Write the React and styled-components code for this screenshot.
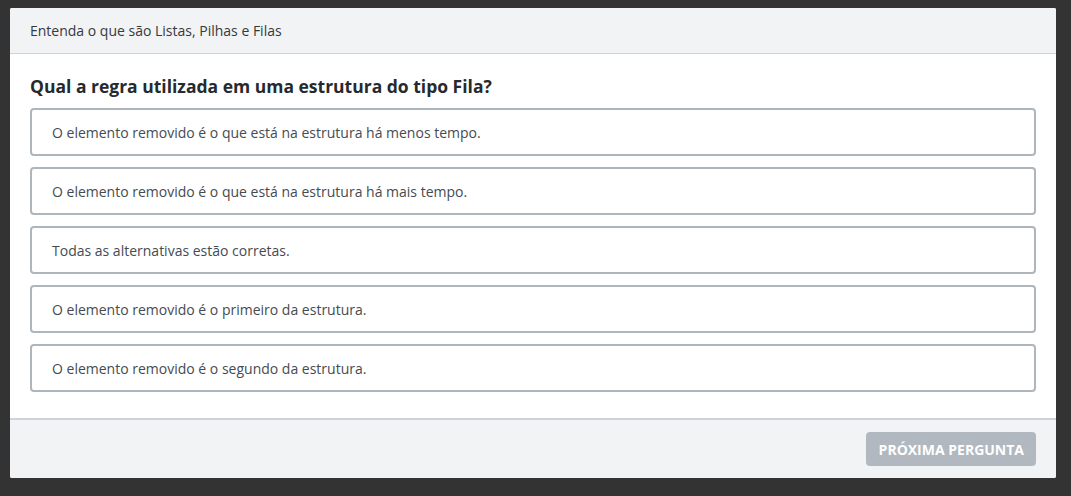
import React from 'react';
import styled, { createGlobalStyle } from 'styled-components';

const GlobalStyle = createGlobalStyle`
  html, body {
    margin: 0;
    padding: 0;
    background: #333333;
    font-family: "Open Sans", "Noto Sans", sans-serif;
  }
`;

const Page = styled.div`
  width: 1071px;
  height: 496px;
  padding: 8px 15px 18px 10px;
  box-sizing: border-box;
`;

const Card = styled.div`
  display: flex;
  flex-direction: column;
  height: 100%;
  background: #ffffff;
  border-radius: 2px;
  overflow: hidden;
`;

const Header = styled.div`
  display: flex;
  align-items: center;
  height: 46px;
  padding: 0 20px 1px;
  box-sizing: border-box;
  background: #f2f3f4;
  border-bottom: 1px solid #cfd2d6;
  font-size: 14px;
  color: #343a40;
`;

const Body = styled.div`
  flex: 1;
  padding: 20px 20px 0;
`;

const Question = styled.h2`
  margin: 0 0 10px;
  font-size: 17.5px;
  line-height: 24px;
  font-weight: 700;
  color: #262a2e;
`;

const Options = styled.div`
  display: flex;
  flex-direction: column;
  gap: 11px;
`;

const Option = styled.button`
  display: flex;
  align-items: center;
  height: 48px;
  padding: 0 20px;
  box-sizing: border-box;
  background: #ffffff;
  border: 2px solid #adb5bd;
  border-radius: 4px;
  font-family: inherit;
  font-size: 14px;
  color: #454b51;
  text-align: left;
  cursor: pointer;
`;

const Footer = styled.div`
  display: flex;
  justify-content: flex-end;
  align-items: center;
  height: 60px;
  padding: 0 20px;
  box-sizing: border-box;
  background: #f2f3f4;
  border-top: 2px solid #cfd2d6;
`;

const NextButton = styled.button`
  height: 34px;
  padding: 0 12px 0 13px;
  border: none;
  border-radius: 4px;
  background: #b1b8bf;
  color: #ffffff;
  font-family: inherit;
  font-size: 14px;
  font-weight: 700;
  text-transform: uppercase;
  cursor: not-allowed;
`;

const alternatives = [
  'O elemento removido é o que está na estrutura há menos tempo.',
  'O elemento removido é o que está na estrutura há mais tempo.',
  'Todas as alternativas estão corretas.',
  'O elemento removido é o primeiro da estrutura.',
  'O elemento removido é o segundo da estrutura.',
];

export default function App() {
  return (
    <>
      <GlobalStyle />
      <Page>
        <Card>
          <Header>Entenda o que são Listas, Pilhas e Filas</Header>
          <Body>
            <Question>Qual a regra utilizada em uma estrutura do tipo Fila?</Question>
            <Options>
              {alternatives.map((text) => (
                <Option key={text}>{text}</Option>
              ))}
            </Options>
          </Body>
          <Footer>
            <NextButton disabled>Próxima pergunta</NextButton>
          </Footer>
        </Card>
      </Page>
    </>
  );
}
